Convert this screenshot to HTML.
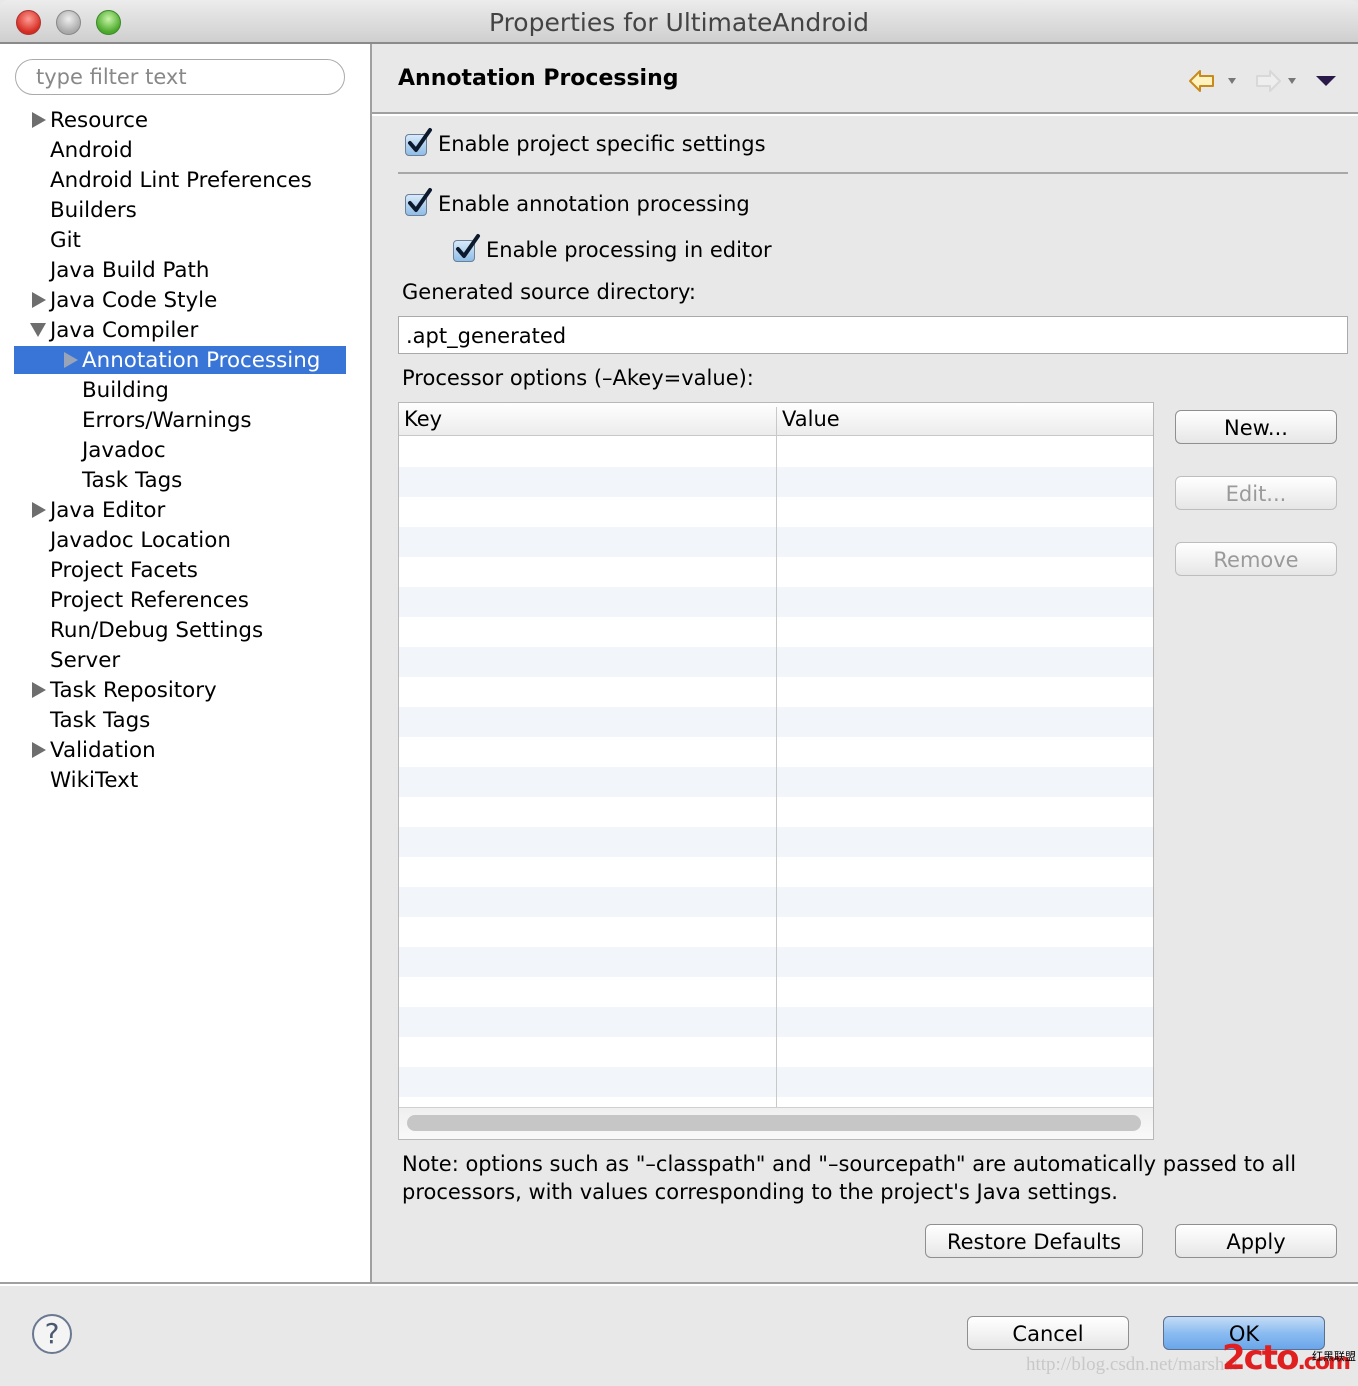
<!DOCTYPE html>
<html><head><meta charset="utf-8"><style>
*{margin:0;padding:0;box-sizing:border-box}
body{width:1358px;height:1386px;position:relative;overflow:hidden;background:#e8e8e8;font-family:"DejaVu Sans","Liberation Sans",sans-serif;font-size:21px;color:#000}
.a{position:absolute;white-space:nowrap}
.tb{position:absolute;left:0;top:0;width:1358px;height:44px;background:linear-gradient(#ececec,#cfcfcf);border-bottom:2px solid #8a8a8a;border-radius:8px 8px 0 0}
.dot{position:absolute;top:10px;width:25px;height:25px;border-radius:50%}
.left{position:absolute;left:0;top:44px;width:370px;height:1238px;background:#fff}
.sep{position:absolute;left:370px;top:44px;width:2px;height:1240px;background:#a0a0a0}
.t{position:absolute;white-space:nowrap;line-height:30px;height:30px}
.tri{position:absolute;width:0;height:0;border-top:8px solid transparent;border-bottom:8px solid transparent;border-left:14px solid #6e6e6e}
.trid{position:absolute;width:0;height:0;border-left:8px solid transparent;border-right:8px solid transparent;border-top:14px solid #6e6e6e}
.cb{position:absolute;width:22px;height:22px;border:1px solid #6b7f98;border-radius:4px;background:linear-gradient(#d9eaf9,#8fbce6)}
.btn{position:absolute;height:34px;border:1px solid #8f8f8f;border-radius:6px;background:linear-gradient(#fff,#f3f3f3 50%,#e6e6e6);text-align:center;line-height:34px;font-size:21px}
.dis{color:#9a9a9a;border-color:#bdbdbd}
</style></head><body>
<div class="tb">
<div class="dot" style="left:16px;background:radial-gradient(circle at 50% 35%,#ff9c95,#d52b20 70%);border:1px solid #a33"></div>
<div class="dot" style="left:56px;background:radial-gradient(circle at 50% 35%,#eee,#a9a9a9 70%);border:1px solid #888"></div>
<div class="dot" style="left:96px;background:radial-gradient(circle at 50% 35%,#c8f5a8,#4aa82a 70%);border:1px solid #3a8a2a"></div>
<div class="a" style="left:0;width:1358px;text-align:center;top:8px;font-size:25px;color:#444">Properties for UltimateAndroid</div>
</div>
<div class="left"></div>
<div class="sep"></div>
<div class="a" style="left:15px;top:59px;width:330px;height:36px;border:1px solid #aaa;border-radius:18px;background:#fff"></div>
<div class="a" style="left:36px;top:65px;color:#888;font-size:21px">type filter text</div>
<div class="a" style="left:14px;top:346px;width:332px;height:28px;background:#3875d7"></div>
<div class="tri" style="left:32px;top:112px"></div>
<div class="tri" style="left:32px;top:292px"></div>
<div class="trid" style="left:30px;top:323px"></div>
<div class="tri" style="left:64px;top:352px;border-left-color:#9aa4b8"></div>
<div class="tri" style="left:32px;top:502px"></div>
<div class="tri" style="left:32px;top:682px"></div>
<div class="tri" style="left:32px;top:742px"></div>
<div style="font-size:21.4px">
<div class="t" style="left:50px;top:106px">Resource</div>
<div class="t" style="left:50px;top:136px">Android</div>
<div class="t" style="left:50px;top:166px">Android Lint Preferences</div>
<div class="t" style="left:50px;top:196px">Builders</div>
<div class="t" style="left:50px;top:226px">Git</div>
<div class="t" style="left:50px;top:256px">Java Build Path</div>
<div class="t" style="left:50px;top:286px">Java Code Style</div>
<div class="t" style="left:50px;top:316px">Java Compiler</div>
<div class="t" style="left:82px;top:346px;color:#fff">Annotation Processing</div>
<div class="t" style="left:82px;top:376px">Building</div>
<div class="t" style="left:82px;top:406px">Errors/Warnings</div>
<div class="t" style="left:82px;top:436px">Javadoc</div>
<div class="t" style="left:82px;top:466px">Task Tags</div>
<div class="t" style="left:50px;top:496px">Java Editor</div>
<div class="t" style="left:50px;top:526px">Javadoc Location</div>
<div class="t" style="left:50px;top:556px">Project Facets</div>
<div class="t" style="left:50px;top:586px">Project References</div>
<div class="t" style="left:50px;top:616px">Run/Debug Settings</div>
<div class="t" style="left:50px;top:646px">Server</div>
<div class="t" style="left:50px;top:676px">Task Repository</div>
<div class="t" style="left:50px;top:706px">Task Tags</div>
<div class="t" style="left:50px;top:736px">Validation</div>
<div class="t" style="left:50px;top:766px">WikiText</div>
</div>
<div class="a" style="left:398px;top:66px;font-size:22px;font-weight:bold">Annotation Processing</div>
<svg class="a" style="left:1185px;top:64px" width="160" height="34">
<path d="M5 17 L15 7 L15 12 L28 12 L28 22 L15 22 L15 27 Z" fill="#fff4c0" stroke="#c98a1c" stroke-width="2" stroke-linejoin="round"/>
<path d="M43 14 L51 14 L47 20 Z" fill="#777"/>
<path d="M95 17 L85 7 L85 12 L72 12 L72 22 L85 22 L85 27 Z" fill="#eee" stroke="#d8d8d8" stroke-width="2" stroke-linejoin="round"/>
<path d="M103 14 L111 14 L107 20 Z" fill="#777"/>
<path d="M131 12 L151 12 L141 22 Z" fill="#2a1a4a"/>
</svg>
<div class="a" style="left:372px;top:112px;width:986px;height:2px;background:#a0a0a0"></div>
<div class="a" style="left:372px;top:114px;width:986px;height:2px;background:#fff"></div>
<div class="cb" style="left:405px;top:134px"></div>
<svg class="a" style="left:404px;top:126px" width="30" height="30"><path d="M6 17 L12 24 L26 4" fill="none" stroke="#0d1a2e" stroke-width="4" stroke-linecap="round" stroke-linejoin="round"/></svg>
<div class="a" style="left:438px;top:132px">Enable project specific settings</div>
<div class="a" style="left:398px;top:172px;width:950px;height:2px;background:#a8a8a8"></div>
<div class="cb" style="left:405px;top:194px"></div>
<svg class="a" style="left:404px;top:186px" width="30" height="30"><path d="M6 17 L12 24 L26 4" fill="none" stroke="#0d1a2e" stroke-width="4" stroke-linecap="round" stroke-linejoin="round"/></svg>
<div class="a" style="left:438px;top:192px">Enable annotation processing</div>
<div class="cb" style="left:453px;top:240px"></div>
<svg class="a" style="left:452px;top:232px" width="30" height="30"><path d="M6 17 L12 24 L26 4" fill="none" stroke="#0d1a2e" stroke-width="4" stroke-linecap="round" stroke-linejoin="round"/></svg>
<div class="a" style="left:486px;top:238px">Enable processing in editor</div>
<div class="a" style="left:402px;top:280px">Generated source directory:</div>
<div class="a" style="left:398px;top:316px;width:950px;height:38px;border:1px solid #a9a9a9;background:#fff"></div>
<div class="a" style="left:406px;top:324px">.apt_generated</div>
<div class="a" style="left:402px;top:366px">Processor options (–Akey=value):</div>
<div class="a" style="left:398px;top:402px;width:756px;height:738px;border:1px solid #b8b8b8;background:#fff;overflow:hidden">
<div style="position:absolute;left:0;top:0;width:756px;height:33px;background:linear-gradient(#fff,#ececec);border-bottom:1px solid #c8c8c8"></div>
<div style="position:absolute;left:0;top:34px;width:756px;height:660px;background:repeating-linear-gradient(#fff 0 30px,#f2f5fa 30px 60px)"></div>
<div style="position:absolute;left:377px;top:4px;width:1px;height:700px;background:#c8c8c8"></div>
<div style="position:absolute;left:0;top:704px;width:756px;height:34px;background:linear-gradient(#efefef,#fafafa);border-top:1px solid #d0d0d0"></div>
<div style="position:absolute;left:8px;top:712px;width:734px;height:16px;border-radius:8px;background:#c6c6c6"></div>
<div style="position:absolute;left:5px;top:4px;font-size:21px">Key</div>
<div style="position:absolute;left:383px;top:4px;font-size:21px">Value</div>
</div>
<div class="btn" style="left:1175px;top:410px;width:162px">New...</div>
<div class="btn dis" style="left:1175px;top:476px;width:162px">Edit...</div>
<div class="btn dis" style="left:1175px;top:542px;width:162px">Remove</div>
<div class="a" style="left:402px;top:1150px;line-height:28px">Note: options such as "–classpath" and "–sourcepath" are automatically passed to all<br>processors, with values corresponding to the project's Java settings.</div>
<div class="btn" style="left:925px;top:1224px;width:218px">Restore Defaults</div>
<div class="btn" style="left:1175px;top:1224px;width:162px">Apply</div>
<div class="a" style="left:0;top:1282px;width:1358px;height:2px;background:#a0a0a0"></div>
<div class="a" style="left:0;top:1284px;width:1358px;height:2px;background:#fff"></div>
<div class="a" style="left:32px;top:1314px;width:40px;height:40px;border:2px solid #6a7890;border-radius:50%;background:#f4f4f4;text-align:center;line-height:36px;font-size:28px;color:#4a5870">?</div>
<div class="btn" style="left:967px;top:1316px;width:162px">Cancel</div>
<div class="btn" style="left:1163px;top:1316px;width:162px;background:linear-gradient(#c4dcf6,#8bbcf0 50%,#6aa6ea);border-color:#5b6f8f">OK</div>
<div class="a" style="left:1026px;top:1354px;font-family:'Liberation Serif',serif;font-size:19px;color:#c8c8c8">http://blog.csdn.net/marshal</div>
<div class="a" style="left:1222px;top:1340px;font-size:34px;font-weight:bold;color:#e02020;letter-spacing:-2px;line-height:36px">2cto<span style="font-size:22px">.com</span></div>
<div class="a" style="left:1312px;top:1348px;font-size:11px;font-family:'Noto Sans CJK SC',sans-serif">红黑联盟</div>
</body></html>
